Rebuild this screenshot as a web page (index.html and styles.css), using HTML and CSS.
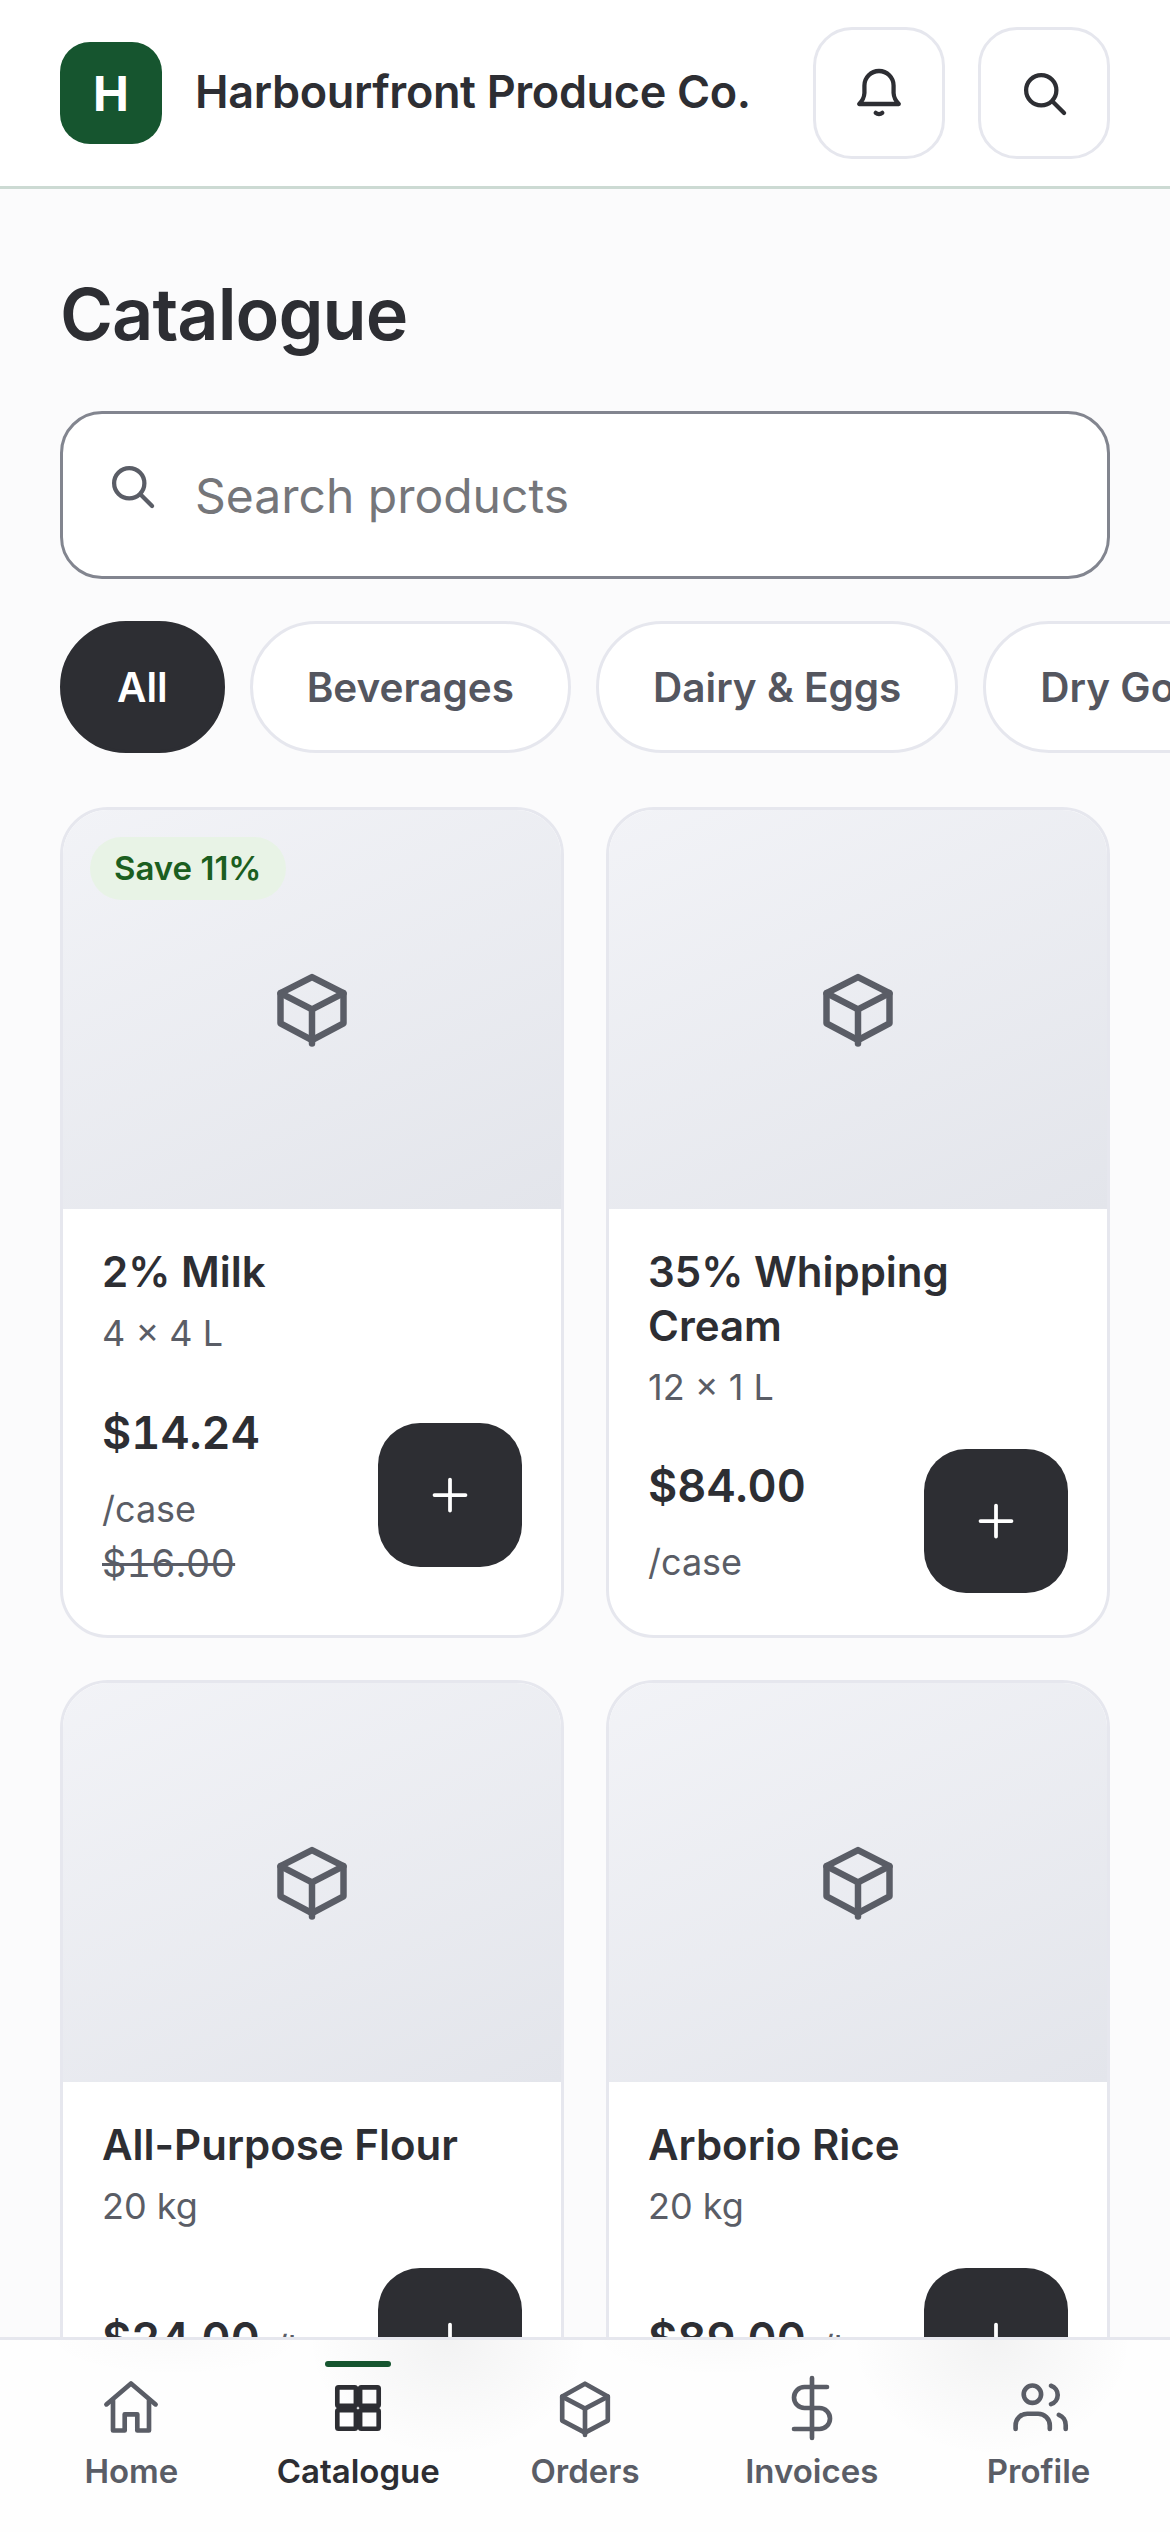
FILE: index.html
```html
<!DOCTYPE html>
<html lang="en">
<head>
    <meta charset="UTF-8">
    <meta name="viewport" content="width=device-width, initial-scale=1.0">
    <title>Catalogue</title>
    <link rel="stylesheet" href="styles.css">
</head>
<body>
    <header class="topbar">
        <div class="logo">H</div>
        <div class="company">Harbourfront Produce Co.</div>
        <button class="icon-btn">
            <svg class="icon-66" viewBox="0 0 24 24"><path d="M4.8 16h14.4c-1-1-1.8-2.2-1.9-4V9.3a5.3 5.3 0 0 0-10.6 0V12c-.1 1.8-.9 3-1.9 4z"/><path d="M10.8 19.2c.7.6 1.7.6 2.4 0"/></svg>
        </button>
        <button class="icon-btn">
            <svg class="icon-66" viewBox="0 0 24 24"><circle cx="11" cy="11" r="5.5"/><path d="M15.2 15.2l4.1 4.1"/></svg>
        </button>
    </header>

    <main class="content">
        <h1 class="page-title">Catalogue</h1>

        <div class="search">
            <svg class="icon-66 search-icon" viewBox="0 0 24 24"><circle cx="11" cy="11" r="5.5"/><path d="M15.2 15.2l4.1 4.1"/></svg>
            <input type="text" class="search-input" placeholder="Search products">
        </div>

        <div class="chips">
            <div class="chip active">All</div>
            <div class="chip">Beverages</div>
            <div class="chip">Dairy &amp; Eggs</div>
            <div class="chip">Dry Goods</div>
        </div>

        <div class="grid">
            <article class="card">
                <div class="thumb">
                    <span class="badge">Save 11%</span>
                    <svg class="box" viewBox="0 0 24 24"><path d="M12 2.6l9 4.6v8.6l-9 4.8-9-4.8V7.2z"/><path d="M3 7.2l9 4.6 9-4.6"/><path d="M12 11.8v9.8"/></svg>
                </div>
                <div class="card-body">
                    <div class="name">2% Milk</div>
                    <div class="pack">4 × 4 L</div>
                    <div class="card-foot">
                        <div class="prices">
                            <span class="price">$14.24</span>
                            <span class="unit">/case</span>
                            <span class="was">$16.00</span>
                        </div>
                        <button class="add"><svg class="plus" viewBox="0 0 24 24"><path d="M12 5.8v12.4M5.8 12h12.4"/></svg></button>
                    </div>
                </div>
            </article>

            <article class="card">
                <div class="thumb">
                    <svg class="box" viewBox="0 0 24 24"><path d="M12 2.6l9 4.6v8.6l-9 4.8-9-4.8V7.2z"/><path d="M3 7.2l9 4.6 9-4.6"/><path d="M12 11.8v9.8"/></svg>
                </div>
                <div class="card-body">
                    <div class="name">35% Whipping Cream</div>
                    <div class="pack">12 × 1 L</div>
                    <div class="card-foot">
                        <div class="prices">
                            <span class="price">$84.00</span>
                            <span class="unit">/case</span>
                        </div>
                        <button class="add"><svg class="plus" viewBox="0 0 24 24"><path d="M12 5.8v12.4M5.8 12h12.4"/></svg></button>
                    </div>
                </div>
            </article>

            <article class="card">
                <div class="thumb">
                    <svg class="box" viewBox="0 0 24 24"><path d="M12 2.6l9 4.6v8.6l-9 4.8-9-4.8V7.2z"/><path d="M3 7.2l9 4.6 9-4.6"/><path d="M12 11.8v9.8"/></svg>
                </div>
                <div class="card-body">
                    <div class="name">All-Purpose Flour</div>
                    <div class="pack">20 kg</div>
                    <div class="card-foot">
                        <div class="prices">
                            <span class="price">$24.00</span>
                            <span class="unit">/bag</span>
                        </div>
                        <button class="add"><svg class="plus" viewBox="0 0 24 24"><path d="M12 5.8v12.4M5.8 12h12.4"/></svg></button>
                    </div>
                </div>
            </article>

            <article class="card">
                <div class="thumb">
                    <svg class="box" viewBox="0 0 24 24"><path d="M12 2.6l9 4.6v8.6l-9 4.8-9-4.8V7.2z"/><path d="M3 7.2l9 4.6 9-4.6"/><path d="M12 11.8v9.8"/></svg>
                </div>
                <div class="card-body">
                    <div class="name">Arborio Rice</div>
                    <div class="pack">20 kg</div>
                    <div class="card-foot">
                        <div class="prices">
                            <span class="price">$89.00</span>
                            <span class="unit">/bag</span>
                        </div>
                        <button class="add"><svg class="plus" viewBox="0 0 24 24"><path d="M12 5.8v12.4M5.8 12h12.4"/></svg></button>
                    </div>
                </div>
            </article>
        </div>
    </main>

    <nav class="tabbar">
        <div class="tab">
            <svg class="icon-72" viewBox="0 0 24 24"><path d="M3.8 10.8L12 3.8l8.2 7"/><path d="M6 9.5v10h3.9v-5.4h4.2v5.4H18v-10"/></svg>
            <span>Home</span>
        </div>
        <div class="tab active">
            <svg class="icon-72" viewBox="0 0 24 24"><rect x="5.1" y="5.1" width="6.2" height="6.2" rx=".4"/><rect x="12.7" y="5.1" width="6.2" height="6.2" rx=".4"/><rect x="5.1" y="12.7" width="6.2" height="6.2" rx=".4"/><rect x="12.7" y="12.7" width="6.2" height="6.2" rx=".4"/></svg>
            <span>Catalogue</span>
        </div>
        <div class="tab">
            <svg class="icon-72" viewBox="0 0 24 24"><path d="M12 3.9l7.6 4.3v8l-7.6 4-7.6-4v-8z"/><path d="M4.4 8.2l7.6 4 7.6-4"/><path d="M12 12.2V21"/></svg>
            <span>Orders</span>
        </div>
        <div class="tab">
            <svg class="icon-72" viewBox="0 0 24 24"><path d="M12 2v20"/><path d="M17 5H9.5a3.5 3.5 0 0 0 0 7h5a3.5 3.5 0 0 1 0 7H6"/></svg>
            <span>Invoices</span>
        </div>
        <div class="tab">
            <svg class="icon-72" viewBox="0 0 24 24"><circle cx="9.8" cy="7.4" r="2.9"/><path d="M4.2 19v-1.2a3.9 3.9 0 0 1 3.9-3.9h3.6a3.9 3.9 0 0 1 3.9 3.9V19"/><path d="M16 4.6a3.2 3.2 0 0 1 0 6.1"/><path d="M18.6 14.3a3.6 3.6 0 0 1 2.3 3.4V19"/></svg>
            <span>Profile</span>
        </div>
    </nav>
</body>
</html>
```

FILE: styles.css
```css
html, body {
    height: 100%;
}
body {
    margin: 0;
    overflow: hidden;
    background-color: #fbfbfc;
    color: #2d2e33;
    font-family: Inter, "Liberation Sans", sans-serif;
}
button {
    padding: 0;
    font-family: inherit;
    cursor: pointer;
}
svg {
    display: block;
    fill: none;
    stroke: currentColor;
    stroke-linecap: round;
    stroke-linejoin: round;
    flex-shrink: 0;
}
.icon-66 {
    width: 66px;
    height: 66px;
    stroke-width: 1.55;
}
.icon-72 {
    width: 72px;
    height: 72px;
    stroke-width: 1.55;
}

/* top bar */
.topbar {
    display: flex;
    align-items: center;
    height: 186px;
    padding: 0 60px;
    background-color: #fff;
    border-bottom: 3px solid #ccdad3;
}
.logo {
    display: flex;
    align-items: center;
    justify-content: center;
    width: 102px;
    height: 102px;
    border-radius: 30px;
    background-color: #16552f;
    color: #fff;
    font-size: 48px;
    font-weight: 700;
}
.company {
    flex: 1;
    margin: 0 0 3px 33px;
    font-size: 45px;
    font-weight: 600;
    letter-spacing: -0.35px;
    white-space: nowrap;
}
.icon-btn {
    display: flex;
    align-items: center;
    justify-content: center;
    width: 132px;
    height: 132px;
    margin-left: 33px;
    border: 3px solid #e6e7ee;
    border-radius: 39px;
    background-color: #fff;
    color: #2d2e33;
}

/* page */
.content {
    padding: 74px 60px 0;
}
.page-title {
    margin: 0 0 46px;
    font-size: 72px;
    font-weight: 600;
    letter-spacing: -0.95px;
    line-height: 102px;
}
.search {
    display: flex;
    align-items: center;
    gap: 30px;
    box-sizing: border-box;
    height: 168px;
    padding: 0 36px;
    border: 3px solid #82858f;
    border-radius: 42px;
    background-color: #fff;
    color: #5a5d66;
}
.search-icon {
    margin-bottom: 18px;
}
.search-input {
    flex: 1;
    min-width: 0;
    padding: 2px 0 0;
    border: 0;
    outline: 0;
    background: transparent;
    color: #2d2e33;
    font-family: inherit;
    font-size: 48px;
    line-height: 60px;
}
.search-input::placeholder {
    color: #75767a;
    opacity: 1;
}

.chips {
    display: flex;
    gap: 25px;
    margin: 42px -60px 0 0;
    overflow: hidden;
}
.chip {
    display: flex;
    align-items: center;
    flex-shrink: 0;
    box-sizing: border-box;
    height: 132px;
    padding: 0 54px;
    border: 3px solid #e6e7ee;
    border-radius: 66px;
    background-color: #fff;
    color: #54565f;
    font-size: 40.5px;
    font-weight: 600;
    white-space: nowrap;
}
.chip.active {
    border-color: #2d2e33;
    background-color: #2d2e33;
    color: #fff;
}

/* product cards */
.grid {
    display: grid;
    grid-template-columns: 1fr 1fr;
    gap: 42px;
    margin-top: 54px;
}
.card {
    display: flex;
    flex-direction: column;
    border: 3px solid #e6e7ee;
    border-radius: 48px;
    background-color: #fff;
    overflow: hidden;
}
.thumb {
    position: relative;
    display: flex;
    align-items: center;
    justify-content: center;
    height: 399px;
    background: linear-gradient(155deg, #f2f3f7, #e3e5eb);
    color: #5a5d66;
}
.box {
    width: 84px;
    height: 84px;
    stroke-width: 1.85;
}
.badge {
    position: absolute;
    top: 27px;
    left: 27px;
    padding: 0 24px;
    border-radius: 32px;
    background-color: #e8f3e6;
    color: #1b5e20;
    font-size: 33px;
    font-weight: 600;
    line-height: 63px;
}
.card-body {
    display: flex;
    flex-direction: column;
    flex: 1;
    padding: 36px 39px 42px;
}
.name {
    font-size: 42px;
    font-weight: 600;
    line-height: 54px;
}
.pack {
    margin-top: 10px;
    color: #5a5d66;
    font-size: 36px;
    line-height: 48px;
}
.card-foot {
    display: flex;
    align-items: center;
    justify-content: space-between;
    gap: 21px;
    margin-top: auto;
    padding-top: 38px;
}
.prices {
    display: flex;
    flex-wrap: wrap;
    flex: 1;
    align-items: flex-end;
    column-gap: 15px;
    row-gap: 13px;
    min-width: 0;
    padding-bottom: 3px;
}
.price {
    font-size: 45px;
    font-variant-numeric: tabular-nums;
    font-weight: 600;
    line-height: 72px;
}
.unit {
    color: #5a5d66;
    font-size: 36px;
    line-height: 54px;
}
.was {
    flex-basis: 100%;
    margin-top: -13px;
    color: #5a5d66;
    font-size: 38px;
    font-variant-numeric: tabular-nums;
    line-height: 54px;
    text-decoration: line-through;
}
.add {
    display: flex;
    align-items: center;
    justify-content: center;
    flex-shrink: 0;
    width: 144px;
    height: 144px;
    border: 0;
    border-radius: 42px;
    background-color: #2d2e33;
    color: #fff;
}
.plus {
    width: 60px;
    height: 60px;
    stroke-width: 1.5;
}

.tabbar {
    position: fixed;
    left: 0;
    right: 0;
    bottom: 0;
    display: flex;
    box-sizing: border-box;
    height: 195px;
    padding: 0 18px;
    border-top: 3px solid #e6e7ee;
    background-color: #fefefe;
    background-image:
        radial-gradient(ellipse 140px 116px at 992px 0, rgba(45, 46, 51, 0.055), rgba(45, 46, 51, 0)),
        radial-gradient(ellipse 140px 116px at 448px 0, rgba(45, 46, 51, 0.055), rgba(45, 46, 51, 0)),
        radial-gradient(ellipse 130px 36px at 175px 0, rgba(45, 46, 51, 0.02), rgba(45, 46, 51, 0)),
        radial-gradient(ellipse 130px 36px at 720px 0, rgba(45, 46, 51, 0.02), rgba(45, 46, 51, 0));
}
.tab {
    position: relative;
    display: flex;
    flex-direction: column;
    align-items: center;
    flex: 1;
    gap: 6px;
    padding-top: 32px;
    color: #5a5d66;
    font-size: 33px;
    font-weight: 600;
    line-height: 42px;
}
.tab.active {
    color: #2d2e33;
}
.tab.active::before {
    content: "";
    position: absolute;
    top: 21px;
    left: 50%;
    width: 66px;
    height: 6px;
    margin-left: -33px;
    border-radius: 3px;
    background-color: #16552f;
}
```
